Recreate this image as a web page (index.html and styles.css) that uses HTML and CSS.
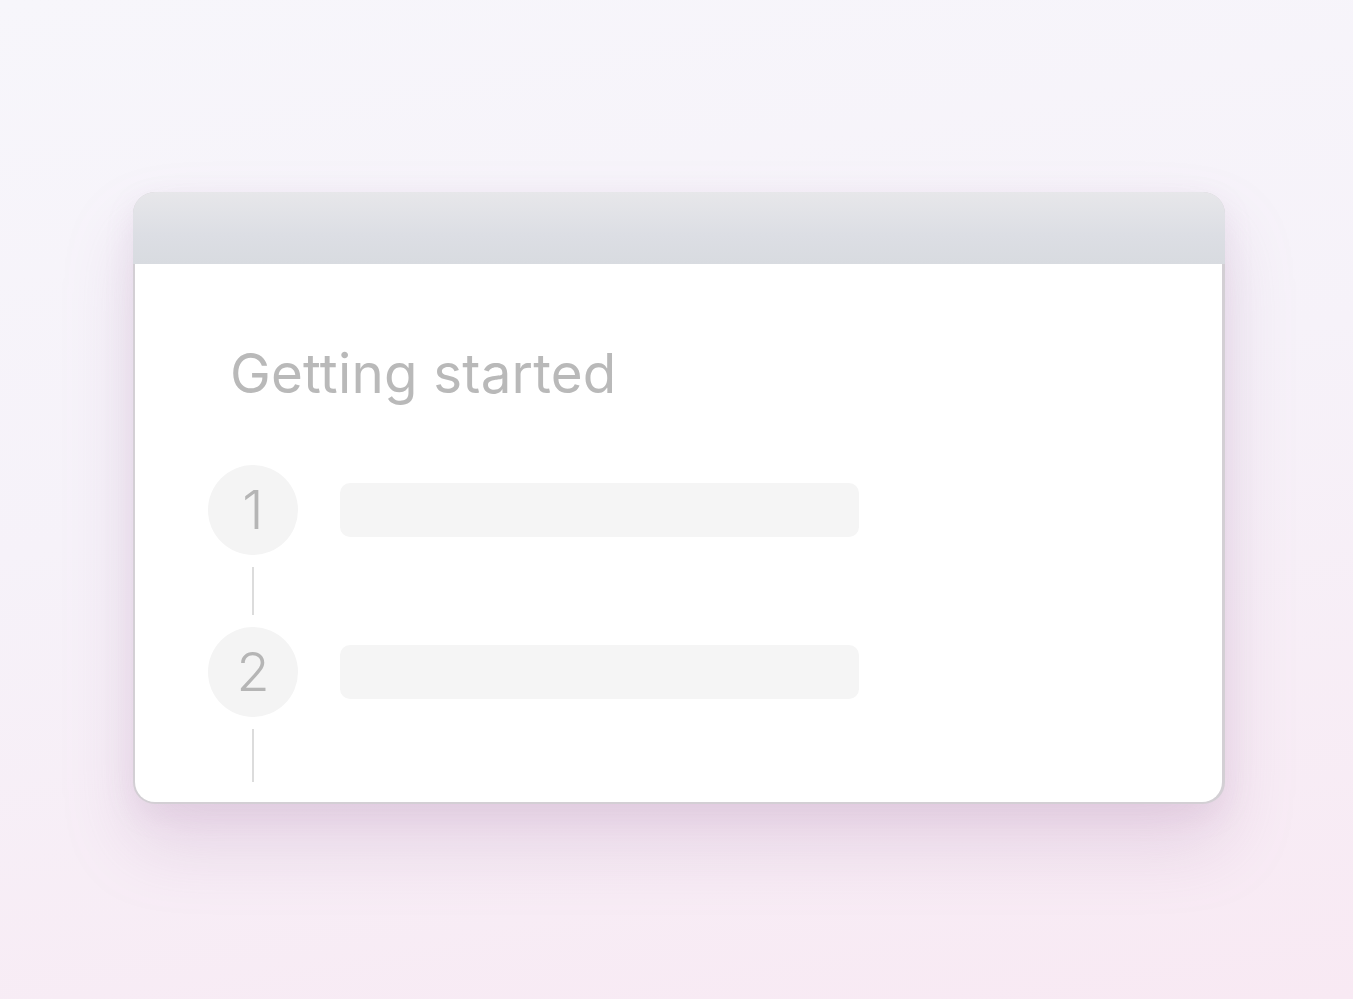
FILE: index.html
```
<!DOCTYPE html>
<html>
<head>
<meta charset="utf-8">
<link rel="stylesheet" href="styles.css">
</head>
<body>
<div class="stage">
  <div class="window">
    <div class="titlebar"></div>
    <div class="content">
      <h1 class="title">Getting started</h1>
      <div class="steps">
        <div class="step">
          <div class="marker">
            <div class="circle">1</div>
            <div class="line"></div>
          </div>
          <div class="bar"></div>
        </div>
        <div class="step">
          <div class="marker">
            <div class="circle">2</div>
            <div class="line"></div>
          </div>
          <div class="bar"></div>
        </div>
      </div>
    </div>
  </div>
</div>
</body>
</html>
```
FILE: styles.css
```
html, body {
  margin: 0;
  padding: 0;
  height: 100%;
}
body {
  background: linear-gradient(170deg, #f7f6fb 0%, #f6f2f9 45%, #f8e9f3 100%);
  font-family: Inter, "Noto Sans", sans-serif;
  overflow: hidden;
}
.stage {
  padding-top: 192px;
  padding-left: 133px;
}
.window {
  width: 1092px;
  height: 612px;
  border-radius: 22px;
  overflow: hidden;
  background: #d3cfd4;
  box-shadow: 0 40px 70px rgba(170, 120, 170, 0.22), 0 10px 30px rgba(170, 130, 170, 0.12);
  display: flex;
  flex-direction: column;
}
.titlebar {
  height: 72px;
  flex: none;
  background: linear-gradient(180deg, #e7e7ea 0%, #dcdee4 60%, #d8dbe0 100%);
}
.content {
  flex: 1;
  background: #fff;
  margin: 0 3px 2px 2px;
  border-radius: 0 0 20px 20px;
  padding: 0 0 0 73px;
}
.title {
  margin: 77px 0 0 22px;
  font-size: 54.7px;
  font-weight: 400;
  color: #b9b9b9;
  line-height: 64px;
  letter-spacing: 0.2px;
}
.steps {
  margin-top: 60px;
  display: flex;
  flex-direction: column;
}
.step {
  display: flex;
  gap: 42px;
}
.marker {
  width: 90px;
  display: flex;
  flex-direction: column;
  align-items: center;
}
.circle {
  width: 90px;
  height: 90px;
  border-radius: 50%;
  background: #f4f4f4;
  color: #b5b5b5;
  font-size: 54px;
  font-weight: 300;
  display: flex;
  align-items: center;
  justify-content: center;
  line-height: 1;
}
.line {
  width: 2px;
  height: 48px;
  background: #dcdcdc;
  margin: 12px 0;
}
.step:last-child .line {
  height: 53px;
}
.bar {
  width: 519px;
  height: 54px;
  border-radius: 10px;
  background: #f5f5f5;
  margin-top: 18px;
}
```
